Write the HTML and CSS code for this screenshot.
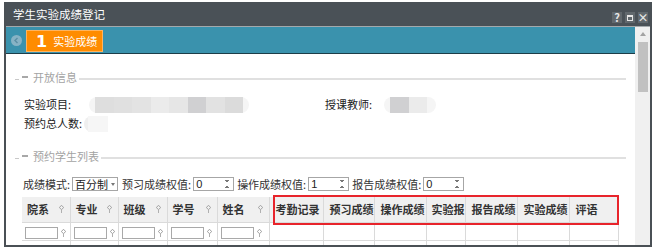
FILE: index.html
```html
<!DOCTYPE html>
<html lang="zh-CN">

<head>
  <meta charset="UTF-8">
  <title>学生实验成绩登记</title>
  <link rel="stylesheet" href="styles.css">
</head>

<body>
  <div class="window">
    <div class="titlebar">
      <span class="title">学生实验成绩登记</span>
      <div class="tools">
        <span class="tool">?</span>
        <span class="tool"><i class="tool-max"></i></span>
        <span class="tool">×</span>
      </div>
    </div>

    <div class="frame">
      <div class="main">
        <div class="band">
          <span class="back">
            <svg width="11" height="11" viewBox="0 0 11 11">
              <circle cx="5.5" cy="5.5" r="5.5" fill="#86b3c5" />
              <path d="M6.5 3L4 5.5L6.5 8" fill="none" stroke="#5a8ea4" stroke-width="1.4" />
            </svg>
          </span>
          <span class="step"><b>1</b>实验成绩</span>
        </div>

        <div class="section-head">
          <span class="dash"></span><span class="toggle"></span>
          <span class="legend">开放信息</span><span class="rule"></span>
        </div>

        <div class="info">
          <div class="info-row">
            <div class="info-cell">
              <span class="label">实验项目:</span>
              <span class="blur blur-project">
                <i class="m1"></i><i class="m2"></i><i class="m3"></i><i class="m4"></i>
                <i class="m5"></i><i class="m6"></i><i class="m7"></i><i class="m8"></i>
              </span>
            </div>
            <div class="info-cell">
              <span class="label">授课教师:</span>
              <span class="blur blur-teacher"><i class="m6"></i><i class="m4"></i></span>
            </div>
          </div>
          <div class="info-row">
            <div class="info-cell">
              <span class="label">预约总人数:</span>
              <span class="blur blur-count"><i class="m9"></i></span>
            </div>
          </div>
        </div>

        <div class="section-head section-list">
          <span class="dash"></span><span class="toggle"></span>
          <span class="legend">预约学生列表</span><span class="rule"></span>
        </div>

        <div class="controls">
          <span class="ctl-label">成绩模式:</span>
          <span class="select">百分制<i class="select-arrow"></i></span>
          <span class="ctl-label">预习成绩权值:</span>
          <span class="spin">0<i class="spin-arrows"></i></span>
          <span class="ctl-label">操作成绩权值:</span>
          <span class="spin">1<i class="spin-arrows"></i></span>
          <span class="ctl-label">报告成绩权值:</span>
          <span class="spin">0<i class="spin-arrows"></i></span>
        </div>

        <div class="grid-wrap">
          <table class="grid">
            <colgroup>
              <col style="width:48px"><col style="width:48px"><col style="width:49px">
              <col style="width:50px"><col style="width:52px"><col style="width:54px">
              <col style="width:51px"><col style="width:52px"><col style="width:39px">
              <col style="width:52px"><col style="width:52px"><col style="width:49px">
            </colgroup>
            <thead>
              <tr class="head-row">
                <th class="filterable">院系<i class="pin"></i></th>
                <th class="filterable">专业<i class="pin"></i></th>
                <th class="filterable">班级<i class="pin"></i></th>
                <th class="filterable">学号<i class="pin"></i></th>
                <th class="filterable">姓名<i class="pin"></i></th>
                <th>考勤记录</th>
                <th>预习成绩</th>
                <th>操作成绩</th>
                <th class="narrow">实验报</th>
                <th>报告成绩</th>
                <th>实验成绩</th>
                <th>评语</th>
              </tr>
              <tr class="filter-row">
                <td><span class="filter-box"></span><i class="pin"></i></td>
                <td><span class="filter-box"></span><i class="pin"></i></td>
                <td><span class="filter-box"></span><i class="pin"></i></td>
                <td><span class="filter-box"></span><i class="pin"></i></td>
                <td><span class="filter-box"></span><i class="pin"></i></td>
                <td></td><td></td><td></td><td></td><td></td><td></td><td></td>
              </tr>
            </thead>
            <tbody>
              <tr class="data-row">
                <td></td><td></td><td></td><td></td><td></td><td></td>
                <td></td><td></td><td></td><td></td><td></td><td></td>
              </tr>
            </tbody>
          </table>
          <div class="mark"></div>
        </div>
      </div>

      <div class="scrollbar">
        <span class="scroll-up"></span>
        <span class="scroll-thumb"></span>
      </div>
    </div>
  </div>
</body>

</html>
```

FILE: styles.css
```css
*,
*::before,
*::after {
  box-sizing: border-box;
}

body {
  margin: 0;
  background: #fff;
  font-family: "Noto Sans CJK SC", "Noto Sans", sans-serif;
  font-size: 11px;
  color: #222;
}

.window {
  display: flex;
  flex-direction: column;
  width: 648px;
  height: 245px;
  margin: 2px 0 0 4px;
  border: 2px solid #4a5055;
  border-top: 0;
  overflow: hidden;
  background: #fff;
}

/* title bar */

.titlebar {
  display: flex;
  justify-content: space-between;
  align-items: center;
  flex: none;
  height: 25px;
  padding: 0 2px 0 7px;
  color: #fff;
  background: #4a5157;
  border-bottom: 1px solid #a4a9ac;
}

.title {
  font-size: 11.5px;
  line-height: 14px;
}

.tools {
  display: flex;
  align-self: flex-start;
  gap: 3px;
  margin-top: 10px;
}

.tool {
  display: flex;
  justify-content: center;
  align-items: center;
  width: 10px;
  height: 11px;
  font-size: 11px;
  font-weight: bold;
  line-height: 11px;
  color: #e6e6e6;
  background: #61686d;
}

.tool-max {
  width: 6px;
  height: 6px;
  border: 1px solid #e6e6e6;
  border-top-width: 2px;
}

/* body */

.frame {
  display: flex;
  flex: 1;
  min-height: 0;
}

.main {
  flex: 1;
  overflow: hidden;
}

.band {
  display: flex;
  align-items: flex-start;
  height: 27px;
  padding: 3px 0 0 5px;
  background: #3a92ad;
  border-bottom: 1px solid #1d3d48;
}

.back {
  display: flex;
  margin-top: 5px;
  margin-right: 4px;
}

.step {
  display: flex;
  align-items: center;
  width: 77px;
  height: 22px;
  padding-left: 9px;
  color: #fff;
  background: #ff8c00;
  border: 1px solid #ffb45e;
}

.step b {
  font-size: 16px;
  font-family: "DejaVu Sans", sans-serif;
  margin-right: 6px;
}

.section-head {
  display: flex;
  align-items: center;
  height: 14px;
  margin: 16px 9px 0;
}

.section-list {
  margin-top: 16px;
}

.dash {
  width: 4px;
  height: 1px;
  margin: 4px 3px 0 0;
  background: #c8c8c8;
}

.toggle {
  width: 6px;
  height: 2px;
  margin-right: 5px;
  background: #a8a8a8;
}

.legend {
  color: #a3a3a3;
  line-height: 14px;
  margin-right: 2px;
}

.rule {
  flex: 1;
  height: 2px;
  margin-top: 3px;
  background: #e0e0e0;
}

.info {
  padding: 11px 0 0 18px;
}

.info-row {
  display: flex;
  height: 19px;
}

.info-cell {
  display: flex;
  align-items: center;
  width: 301px;
}

.label {
  line-height: 19px;
}

.blur {
  display: flex;
  height: 16px;
  padding: 0 6px;
  border-radius: 10px;
  background: #f5f5f5;
  filter: blur(0.6px);
}

.blur i {
  display: block;
  width: 18.5px;
  height: 16px;
}

.blur-project {
  margin-left: 18px;
}

.blur-teacher {
  margin-left: 12px;
  padding-right: 9px;
}

.blur-count {
  margin-left: 2px;
  padding: 0 0 0 4px;
  background: #efefef;
  border-radius: 8px 0 0 8px;
}

.blur-count i {
  width: 20px;
}

.m1 { background: #dedede; }
.m2 { background: #e0e0e0; }
.m3 { background: #e3e3e3; }
.m4 { background: #ebebeb; }
.m5 { background: #e6e6e6; }
.m6 { background: #d0d0d2; }
.m7 { background: #e2e2e2; }
.m8 { background: #dbdbdb; }
.m9 { background: #f6f6f6; }

/* weight controls */

.controls {
  display: flex;
  align-items: center;
  height: 16px;
  margin-top: 13px;
  padding-left: 17px;
  color: #333;
}

.ctl-label {
  margin-right: 2px;
}

.select,
.spin {
  position: relative;
  display: flex;
  align-items: center;
  height: 14px;
  padding-left: 2px;
  line-height: 12px;
  color: #222;
  border: 1px solid #a6a6a6;
  background: #fff;
}

.select {
  width: 46px;
  margin-right: 4px;
}

.select-arrow {
  position: absolute;
  right: 2px;
  top: 5px;
  border: 2.5px solid transparent;
  border-top: 3px solid #777;
}

.spin {
  width: 41px;
  margin-right: 3px;
  font-family: "Liberation Sans", sans-serif;
}

.spin-arrows {
  position: absolute;
  right: 4px;
  top: 2px;
  width: 4px;
  height: 8px;
  background:
    linear-gradient(to top right, transparent 50%, #777 50%) left top / 2px 3px no-repeat,
    linear-gradient(to top left, transparent 50%, #777 50%) right top / 2px 3px no-repeat,
    linear-gradient(to bottom right, transparent 50%, #777 50%) left bottom / 2px 3px no-repeat,
    linear-gradient(to bottom left, transparent 50%, #777 50%) right bottom / 2px 3px no-repeat;
}

/* grid */

.grid-wrap {
  position: relative;
  width: 596px;
  margin: 5px 0 0 16px;
}

.grid {
  width: 596px;
  table-layout: fixed;
  border-collapse: collapse;
}

.grid th,
.grid td {
  padding: 0;
  border-right: 1px solid #dadada;
  border-bottom: 1px solid #dadada;
  white-space: nowrap;
  overflow: hidden;
}

.head-row th {
  height: 25px;
  padding-left: 6px;
  font-weight: bold;
  text-align: left;
  color: #333;
  background: #f0f0f0;
}

.head-row .narrow {
  padding-left: 5px;
}

.head-row .filterable {
  position: relative;
  padding-left: 5px;
}

.head-row .pin {
  position: absolute;
  right: 6px;
  top: 8px;
}

.pin {
  display: inline-block;
  width: 5px;
  height: 8px;
  background:
    radial-gradient(circle at 2.5px 2.5px, transparent 1px, #b0b0b0 1.2px, #b0b0b0 2px, transparent 2.3px),
    linear-gradient(#b0b0b0, #b0b0b0) 2px 4px / 1px 4px no-repeat;
}

.filter-row td {
  height: 18px;
  padding-left: 3px;
}

.filter-box {
  display: inline-block;
  width: 33px;
  height: 12px;
  vertical-align: middle;
  border: 1px solid #a9a9a9;
  background: #fff;
}

.filter-row .pin {
  margin-left: 3px;
  vertical-align: middle;
}

.data-row td {
  height: 20px;
}

.mark {
  position: absolute;
  left: 251px;
  top: -2px;
  width: 346px;
  height: 30px;
  border: 2px solid #e8242b;
}

/* scrollbar */

.scrollbar {
  display: flex;
  flex-direction: column;
  align-items: center;
  width: 15px;
  background: #f0f0f0;
}

.scroll-up {
  margin-top: 5px;
  border: 3px solid transparent;
  border-bottom: 4px solid #a3a3a3;
  border-top: 0;
}

.scroll-thumb {
  width: 10px;
  height: 50px;
  margin-top: 6px;
  background: #c1c1c1;
}
```
